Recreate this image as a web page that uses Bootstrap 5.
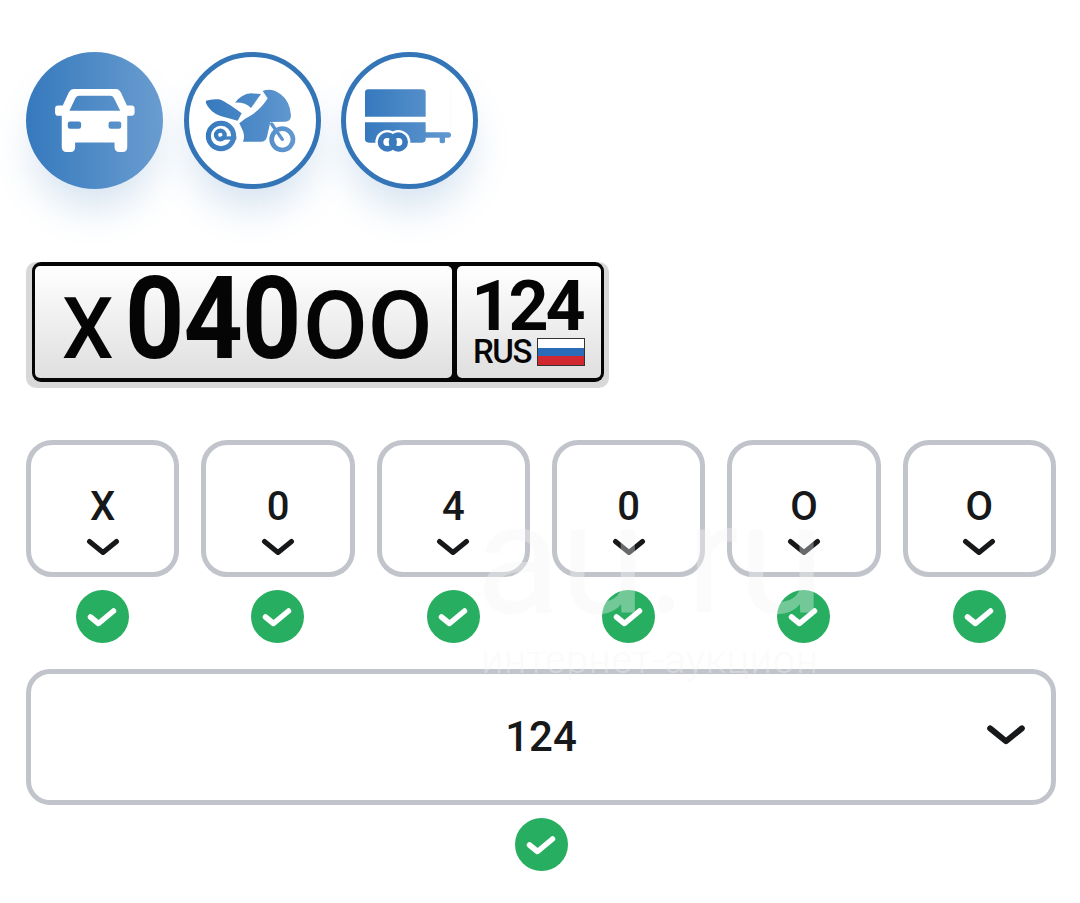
<!doctype html>
<html lang="ru"><head><meta charset="utf-8"><title>Номер</title>
<link href="https://cdn.jsdelivr.net/npm/bootstrap@5.3.0/dist/css/bootstrap.min.css" rel="stylesheet">
<style>
html,body{background:#fff;height:903px;overflow:hidden}
body{font-family:Roboto,"Liberation Sans",sans-serif;color:#17181a}
.page-wrap{position:relative;padding:52px 24px 0 26px;height:903px}
.type-row{gap:20.5px}
.type-btn{width:137px;height:137px;border-radius:50%;border:5px solid #3475b8;background:#fff;padding:0;display:flex;align-items:center;justify-content:center;box-shadow:0 26px 38px -6px rgba(55,119,187,.2)}
.type-btn.sel{background:linear-gradient(90deg,#3579bd,#6a9dd0);border:0}
.type-btn svg{width:137px;height:137px;flex:none}
.plate-shadow{margin-top:73px;width:583px;height:126px;background:#d8d8d8;border-radius:10px;padding-left:6px}
.plate-black{width:572px;height:120px;background:#050505;border-radius:9px;padding:4px 3px;gap:5px}
.plate-panel{background:linear-gradient(180deg,#fff,#dfdfdf);border-radius:5px;height:112px;overflow:hidden;color:#050505}
.plate-main{width:417px;padding-left:27px;align-items:baseline}
.plate-big{display:inline-block;width:175px;font-size:115px;font-weight:700;letter-spacing:-1px;line-height:106px;white-space:nowrap;transform:scaleX(.9);transform-origin:0 50%}
.plate-x{display:inline-block;width:63px;font-size:86px;font-weight:500;line-height:106px;transform:scaleX(.95);transform-origin:0 50%}
.plate-oo{display:inline-block;margin-left:3px;font-size:94px;font-weight:500;line-height:106px;white-space:nowrap}
.plate-side{width:144px;flex-direction:column;align-items:center}
.side-num{font-size:70px;font-weight:700;letter-spacing:-3px;line-height:62px;margin:9px 4px 0 0}
.side-foot{gap:6px;margin-top:1px}
.side-rus{font-size:33px;line-height:28px;font-weight:500;letter-spacing:-1.5px}
.flag{width:48px;height:28px;border:1px solid #333;background:linear-gradient(180deg,#fff 33%,#2b6cb8 33% 66%,#d1272f 66%)}
.char-grid{margin-top:52px;display:grid;grid-template-columns:repeat(6,1fr);gap:13px 22px}
.char-box{height:137px;border:5px solid #c2c4cb;border-radius:26px;padding-top:45px;background:#fff}
.char-txt{font-size:40px;font-weight:500;line-height:34px}
.chev{display:block;width:34px;height:20px;margin:14px auto 0}
.tick{width:53px;height:53px;display:block}
.wide-box{margin-top:26px;height:136px;border:5px solid #c2c4cb;border-radius:24px;background:#fff;position:relative}
.wide-txt{font-size:42px;font-weight:500;line-height:1}
.wide-chev{position:absolute;right:25px;top:50%;margin-top:-13px;width:40px;height:24px}
.tick-low{margin-top:13px}
.wm{position:absolute;left:465px;top:504px;width:370px;pointer-events:none;color:rgba(255,255,255,.3);text-align:center;text-shadow:0 0 1px rgba(200,200,200,.1)}
.wm-a{font-size:155px;line-height:110px;font-weight:400}
.wm-b{font-size:39px;line-height:40px;letter-spacing:1px;margin-top:26px;font-weight:300}
</style></head>
<body>
<svg width="0" height="0" class="position-absolute"><defs>
<linearGradient id="blm" gradientUnits="userSpaceOnUse" x1="30" x2="300" y1="0" y2="0"><stop offset="0" stop-color="#3579bd"/><stop offset="1" stop-color="#6298d0"/></linearGradient>
<linearGradient id="blt" gradientUnits="userSpaceOnUse" x1="30" x2="290" y1="0" y2="0"><stop offset="0" stop-color="#3579bd"/><stop offset="1" stop-color="#6298d0"/></linearGradient>
<symbol id="tk" viewBox="0 0 53 53"><circle cx="26.5" cy="26.5" r="26.5" fill="#27ae60"/><path d="M14.500 27 L22.500 33.500 L37.500 21" fill="none" stroke="#fff" stroke-width="5.500" stroke-linecap="round" stroke-linejoin="round"/></symbol>
<symbol id="cv" viewBox="0 0 34 20"><path d="M3.500 3.500 L17 14.500 L30.500 3.500" fill="none" stroke="#17181a" stroke-width="5" stroke-linecap="round" stroke-linejoin="round"/></symbol>
</defs></svg>
<div class="page-wrap">
  <div class="d-flex type-row">
    <button class="type-btn sel" type="button" aria-label="Авто"><svg viewBox="48 37 410 410"><path fill="#fff" fill-rule="evenodd" d="M192 148H316Q326 148 332 158L350 197H364Q373 197 373 206V218Q373 228 362 228H351V322Q351 336 337 336H328Q313 336 313 322V308H195V322Q195 336 181 336H170Q155 336 155 322V228H145Q135 228 135 218V206Q135 197 144 197H158L176 158Q182 148 192 148ZM207 168Q200 168 196 175L178 213H330L311 175Q307 168 301 168ZM180 245Q173 245 173 252V260Q173 267 180 267H206Q213 267 213 260V252Q213 245 206 245ZM302 245Q295 245 295 252V260Q295 267 302 267H326Q333 267 333 260V252Q333 245 326 245Z"/></svg></button>
    <button class="type-btn" type="button" aria-label="Мото"><svg viewBox="-33 -84 411 411"><g fill="url(#blm)"><path d="M33 62Q50 56 72 58Q88 62 140 100L128 122L90 112Q55 102 44 86Q30 70 33 62Z"/><path d="M120 68Q140 42 168 40L198 42L168 84Q150 66 120 68Z"/><path d="M203 33Q230 22 256 42Q284 62 288 105Q288 124 272 125L226 126L216 170Q212 185 198 185H144Q152 165 140 145L133 130Q150 115 170 105Q200 85 218 55Z"/></g><g fill="none" stroke="url(#blm)"><circle cx="78" cy="168" r="38" stroke-width="15"/><circle cx="76" cy="165" r="13" stroke-width="13"/><path d="M76 174H124" stroke-width="10"/><circle cx="262" cy="178" r="32" stroke-width="14"/><path d="M262 178L230 132" stroke-width="10" stroke-linecap="round"/></g></svg></button>
    <button class="type-btn" type="button" aria-label="Прицеп"><svg viewBox="-42 -84 411 411"><path d="M288 30V155" stroke="#eef2f8" stroke-width="1.500"/><g fill="url(#blt)"><path d="M30 110V38Q30 28 40 28H200Q212 28 212 38V110Z"/><path d="M30 127H212V157H280Q288 157 288 165Q288 173 280 173H270V185Q270 190 262 190Q254 190 254 185V173H212V178Q212 188 202 188H42Q30 188 30 178Z"/></g><circle cx="97" cy="186" r="36" fill="#fff"/><circle cx="130" cy="186" r="36" fill="#fff"/><g fill="none" stroke="#3a7abc" stroke-width="17"><circle cx="97" cy="186" r="20.500"/><circle cx="130" cy="186" r="20.500"/></g></svg></button>
  </div>

  <div class="plate-shadow">
    <div class="plate-black d-flex">
      <div class="plate-panel plate-main d-flex"><span class="plate-x">X</span><span class="plate-big">040</span><span class="plate-oo">OO</span></div>
      <div class="plate-panel plate-side d-flex"><div class="side-num">124</div><div class="side-foot d-flex align-items-center"><span class="side-rus">RUS</span><span class="flag"></span></div></div>
    </div>
  </div>

  <div class="char-grid text-center">
    <div class="char-box"><div class="char-txt">X</div><svg class="chev"><use href="#cv"/></svg></div>
    <div class="char-box"><div class="char-txt">0</div><svg class="chev"><use href="#cv"/></svg></div>
    <div class="char-box"><div class="char-txt">4</div><svg class="chev"><use href="#cv"/></svg></div>
    <div class="char-box"><div class="char-txt">0</div><svg class="chev"><use href="#cv"/></svg></div>
    <div class="char-box"><div class="char-txt">O</div><svg class="chev"><use href="#cv"/></svg></div>
    <div class="char-box"><div class="char-txt">O</div><svg class="chev"><use href="#cv"/></svg></div>
    <svg class="tick mx-auto"><use href="#tk"/></svg>
    <svg class="tick mx-auto"><use href="#tk"/></svg>
    <svg class="tick mx-auto"><use href="#tk"/></svg>
    <svg class="tick mx-auto"><use href="#tk"/></svg>
    <svg class="tick mx-auto"><use href="#tk"/></svg>
    <svg class="tick mx-auto"><use href="#tk"/></svg>
  </div>

  <div class="wide-box d-flex align-items-center justify-content-center"><span class="wide-txt">124</span><svg class="wide-chev" viewBox="0 0 34 20"><use href="#cv"/></svg></div>
  <svg class="tick mx-auto tick-low"><use href="#tk"/></svg>

  <div class="wm"><div class="wm-a">au.ru</div><div class="wm-b">интернет-аукцион</div></div>
</div>
</body></html>
